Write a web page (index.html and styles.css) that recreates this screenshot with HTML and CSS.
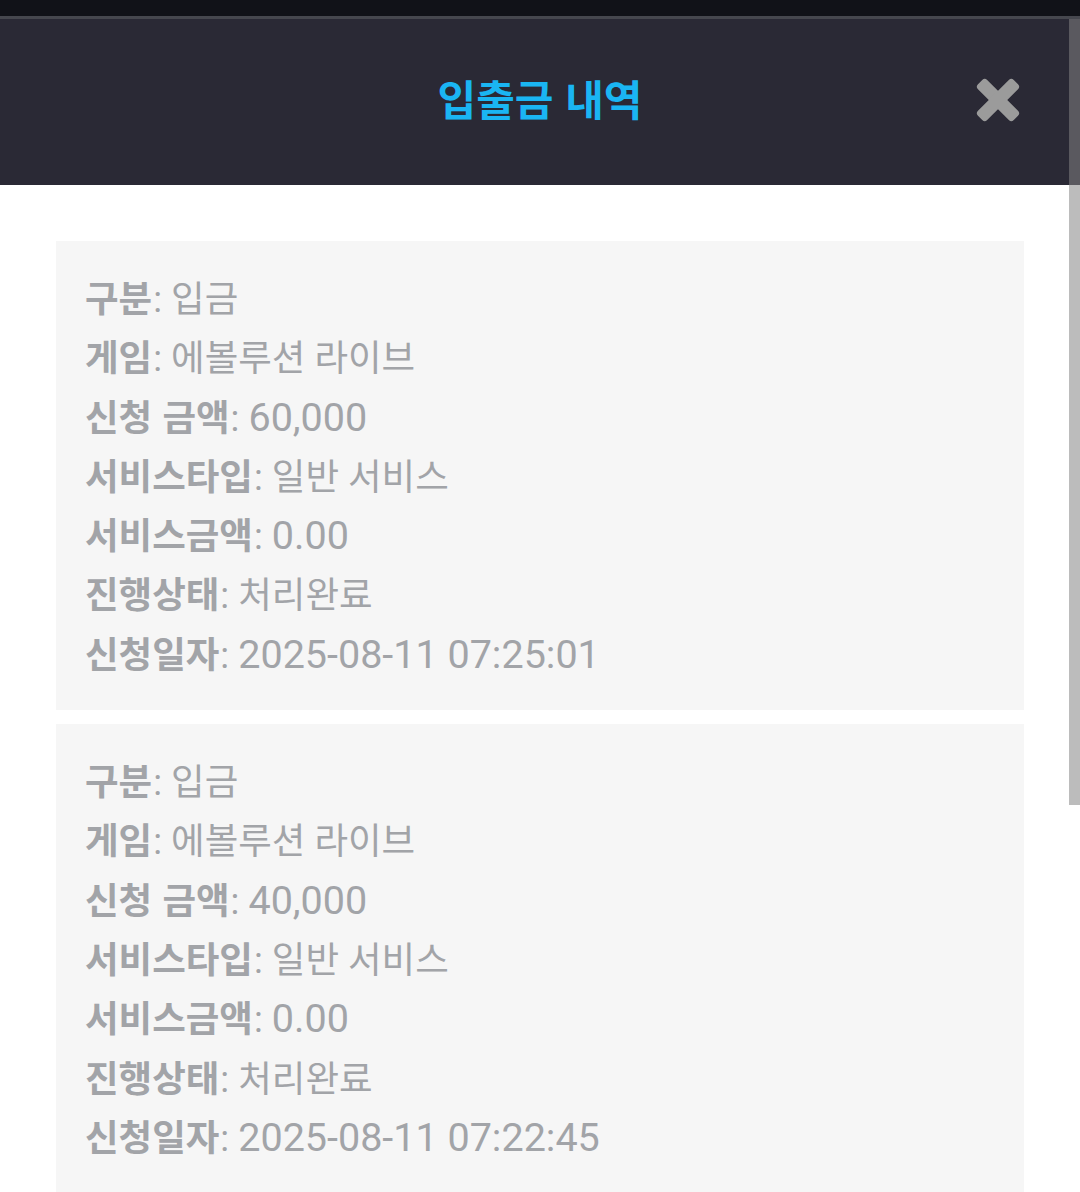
FILE: index.html
```html
<!DOCTYPE html>
<html lang="ko">
<head>
  <meta charset="UTF-8">
  <title>입출금 내역</title>
<link rel="stylesheet" href="styles.css">
</head>
<body>
<div class="topbar"></div>
<div class="modal">
  <div class="modal-head">
    <h2 class="modal-title">입출금 내역</h2>
    <a class="close" href="#">
      <svg width="46" height="46" viewBox="0 0 46 46">
        <rect x="-2.3" y="16.5" width="50.6" height="13" rx="3.5" transform="rotate(45 23 23)" fill="#9b9b9b"/>
        <rect x="-2.3" y="16.5" width="50.6" height="13" rx="3.5" transform="rotate(-45 23 23)" fill="#9b9b9b"/>
      </svg>
    </a>
  </div>

  <div class="modal-body">
    <div class="history">
      <div class="row"><b>구분</b>: 입금</div>
      <div class="row"><b>게임</b>: 에볼루션 라이브</div>
      <div class="row"><b>신청 금액</b>: <span class="num">60,000</span></div>
      <div class="row"><b>서비스타입</b>: 일반 서비스</div>
      <div class="row"><b>서비스금액</b>: <span class="num">0.00</span></div>
      <div class="row"><b>진행상태</b>: 처리완료</div>
      <div class="row"><b>신청일자</b>: <span class="num">2025-08-11 07:25:01</span></div>
    </div>
    <div class="history">
      <div class="row"><b>구분</b>: 입금</div>
      <div class="row"><b>게임</b>: 에볼루션 라이브</div>
      <div class="row"><b>신청 금액</b>: <span class="num">40,000</span></div>
      <div class="row"><b>서비스타입</b>: 일반 서비스</div>
      <div class="row"><b>서비스금액</b>: <span class="num">0.00</span></div>
      <div class="row"><b>진행상태</b>: 처리완료</div>
      <div class="row"><b>신청일자</b>: <span class="num">2025-08-11 07:22:45</span></div>
    </div>
  </div>

  <div class="scrollbar"></div>
</div>
</body>
</html>
```

FILE: styles.css
```css
body {
  margin: 0;
  background: #fff;
  font-family: Roboto, "Noto Sans CJK KR", sans-serif;
  height: 1192px;
  overflow: hidden;
}

.topbar {
  height: 16px;
  background: #111218;
}

.modal {
  position: relative;
  border-top: 3px solid #46474e;
}

.modal-head {
  height: 166px;
  background: #2a2935;
  display: flex;
  align-items: center;
  justify-content: center;
  position: relative;
}

.modal-title {
  margin: 0 0 10px 0;
  font-family: "Noto Sans CJK KR", sans-serif;
  font-weight: bold;
  font-size: 42px;
  color: #1ab5f3;
}

.close {
  position: absolute;
  right: 59px;
  top: 58px;
  display: block;
  width: 46px;
  height: 46px;
}

.close svg {
  display: block;
}

.modal-body {
  padding: 56px 56px 0 56px;
}

.history {
  background: #f6f6f6;
  padding: 26px 29px 28px;
  margin-bottom: 14px;
}

.row {
  height: 59.3px;
  line-height: 59.3px;
  font-size: 36.5px;
  color: #a2a4a8;
  white-space: nowrap;
}

.row b {
  font-family: "Noto Sans CJK KR", sans-serif;
  font-weight: bold;
  margin-right: 1px;
}

.num {
  font-family: Roboto, sans-serif;
  font-size: 39.5px;
  line-height: 1;
}

.scrollbar {
  position: absolute;
  right: 0;
  top: 0;
  width: 11px;
  height: 786px;
  background: rgba(131, 131, 131, 0.54);
}
```
